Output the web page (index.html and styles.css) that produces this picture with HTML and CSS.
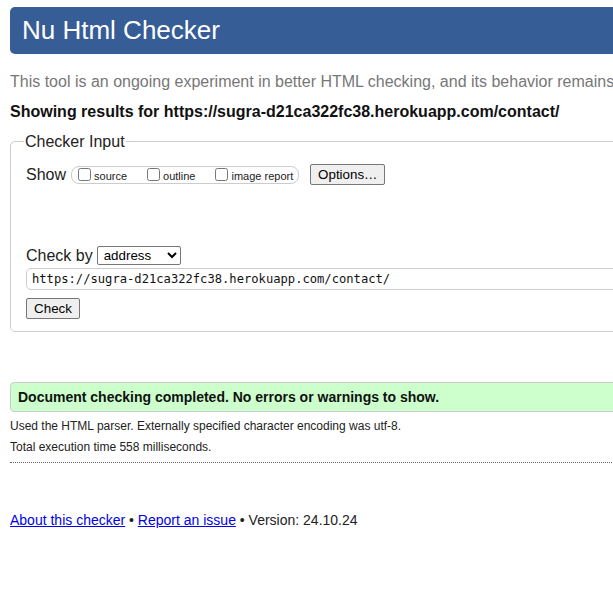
FILE: index.html
```html
<!DOCTYPE html>
<html lang="en">
<head>
<meta charset="utf-8">
<title>Showing results for https://sugra-d21ca322fc38.herokuapp.com/contact/ - Nu Html Checker</title>
<link rel="stylesheet" href="styles.css">
</head>
<body>
<div class="page">
  <h1 class="banner">Nu Html Checker</h1>
  <p class="intro">This tool is an ongoing experiment in better HTML checking, and its behavior remains subject to change</p>
  <p class="results">Showing results for https://sugra-d21ca322fc38.herokuapp.com/contact/</p>
  <form class="checker">
    <fieldset class="fs">
      <legend class="fs-legend">Checker Input</legend>
      <div class="show-row">
        <span class="row-label">Show</span>
        <span class="show-box">
          <label class="opt"><input type="checkbox" class="cb"><span class="opt-text">source</span></label>
          <label class="opt"><input type="checkbox" class="cb"><span class="opt-text">outline</span></label>
          <label class="opt"><input type="checkbox" class="cb"><span class="opt-text">image report</span></label>
        </span>
        <button type="button" class="btn btn-options">Options…</button>
      </div>
      <div class="checkby-row">
        <span class="row-label">Check by</span>
        <select class="sel">
          <option>address</option>
          <option>file upload</option>
          <option>text input</option>
        </select>
      </div>
      <input class="url" type="url" value="https://sugra-d21ca322fc38.herokuapp.com/contact/">
      <div class="submit-row">
        <button type="button" class="btn btn-check">Check</button>
      </div>
    </fieldset>
  </form>
  <p class="success">Document checking completed. No errors or warnings to show.</p>
  <p class="details">Used the HTML parser. Externally specified character encoding was utf-8.</p>
  <p class="details">Total execution time 558 milliseconds.</p>
  <hr class="dots">
  <p class="footer"><a href="#about">About this checker</a> • <a href="#issue">Report an issue</a> • Version: 24.10.24</p>
</div>
</body>
</html>
```

FILE: styles.css
```css
html {
  overflow: hidden;
  background: #fff;
}
body {
  margin: 0;
  font-family: "Liberation Sans", Arial, sans-serif;
  color: #222;
}
.page {
  width: 960px;
  padding: 7px 0 0 10px;
}
.banner {
  margin: 0;
  height: 47px;
  line-height: 46px;
  padding-left: 12px;
  font-size: 26px;
  font-weight: normal;
  color: #fff;
  background: #365d95;
  border-radius: 5px;
}
.intro {
  margin: 18px 0 0;
  font-size: 16px;
  line-height: 19px;
  color: #777;
  white-space: nowrap;
}
.results {
  margin: 11px 0 0;
  font-size: 16px;
  line-height: 19px;
  font-weight: bold;
  color: #111;
}
.checker {
  margin: 11px 0 0;
}
.fs {
  margin: 0;
  border: 1px solid #ccc;
  border-radius: 5px;
  padding: 13px 15px 12px 15px;
}
.fs-legend {
  padding: 0 1px;
  margin-left: -2px;
  font-size: 16px;
  line-height: 19px;
  color: #222;
}
.show-row {
  display: flex;
  align-items: center;
  height: 21px;
}
.row-label {
  font-size: 16px;
  color: #222;
}
.show-box {
  display: flex;
  align-items: center;
  height: 16px;
  margin-left: 5px;
  padding: 0 5px 0 2px;
  border: 1px solid #ccc;
  border-radius: 8px;
}
.opt {
  display: flex;
  align-items: center;
  font-size: 11px;
  color: #222;
  margin-right: 16px;
}
.opt:last-child {
  margin-right: 0;
}
.opt-text {
  padding-top: 2px;
}
.cb {
  width: 13px;
  height: 13px;
  margin: 0 3px 0 4px;
}
.btn {
  font-family: "Liberation Sans", Arial, sans-serif;
  font-size: 13.33px;
  color: #000;
  background: #efefef;
  border: 1px solid #767676;
  border-radius: 2px;
  padding: 0 6px;
  height: 21px;
}
.btn-options {
  margin-left: 11px;
  width: 75px;
}
.checkby-row {
  display: flex;
  align-items: center;
  margin-top: 61px;
  height: 19px;
}
.sel {
  margin-left: 4px;
  width: 84px;
  height: 19px;
  font-family: "Liberation Sans", Arial, sans-serif;
  font-size: 13.33px;
  color: #000;
  background: #fff;
  border: 1px solid #767676;
  border-radius: 2px;
  padding: 0 0 0 2px;
}
.url {
  display: block;
  box-sizing: border-box;
  width: 100%;
  height: 22px;
  margin-top: 3px;
  padding: 0 5px;
  border: 1px solid #ccc;
  border-radius: 5px;
  font-family: "DejaVu Sans Mono", "Liberation Mono", monospace;
  font-size: 12.15px;
  color: #111;
  background: #fff;
}
.submit-row {
  margin-top: 8px;
  display: flex;
}
.btn-check {
  width: 54px;
}
.success {
  margin: 50px 0 0;
  height: 28px;
  line-height: 28px;
  padding-left: 7px;
  background: #ccffcc;
  border: 1px solid #ccc;
  border-radius: 4px 0 0 4px;
  font-size: 14px;
  font-weight: bold;
  color: #111;
}
.details {
  margin: 0;
  font-size: 12px;
  line-height: 21px;
  color: #222;
}
.success + .details {
  margin-top: 4px;
}
.dots {
  margin: 4px 0 0;
  height: 0;
  border: 0;
  border-top: 1px dotted #666;
}
.footer {
  margin: 49px 0 0;
  font-size: 14px;
  color: #222;
}
.footer a {
  color: #0000ee;
}
```
